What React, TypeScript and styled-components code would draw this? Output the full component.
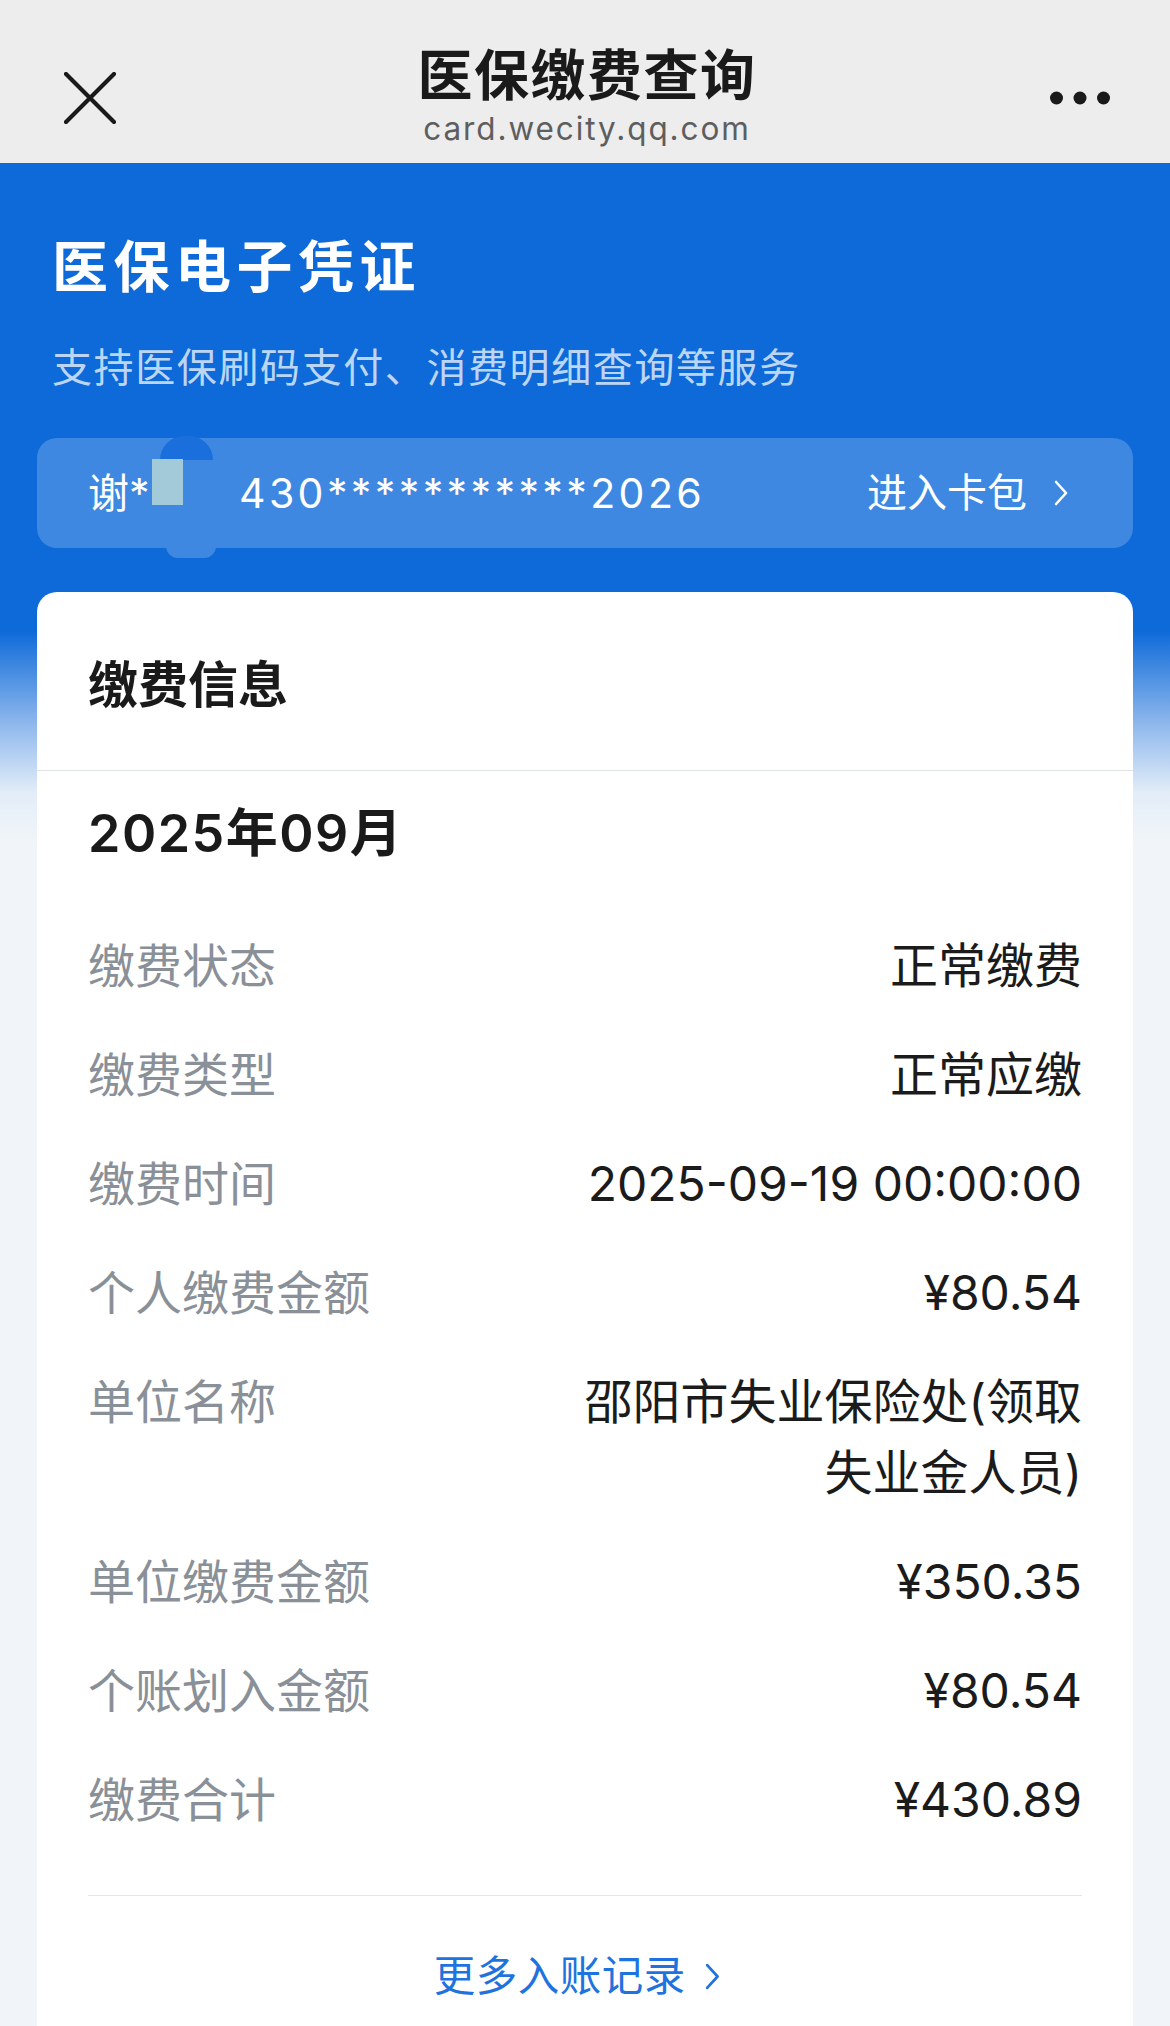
import React from "react";
import styled, { createGlobalStyle } from "styled-components";

const GlobalStyle = createGlobalStyle`
  * {
    box-sizing: border-box;
  }
  body {
    margin: 0;
    background: #f1f5f9;
    font-family: Inter, "Noto Sans CJK SC", sans-serif;
    color: #1a1a1a;
  }
`;

interface RowData {
  label: string;
  value: string;
}

const rows: RowData[] = [
  { label: "缴费状态", value: "正常缴费" },
  { label: "缴费类型", value: "正常应缴" },
  { label: "缴费时间", value: "2025-09-19 00:00:00" },
  { label: "个人缴费金额", value: "¥80.54" },
  { label: "单位名称", value: "邵阳市失业保险处(领取失业金人员)" },
  { label: "单位缴费金额", value: "¥350.35" },
  { label: "个账划入金额", value: "¥80.54" },
  { label: "缴费合计", value: "¥430.89" },
];

function CloseIcon() {
  return (
    <svg width="52" height="52" viewBox="0 0 52 52">
      <path d="M2 2 L50 50 M50 2 L2 50" stroke="#1a1a1a" strokeWidth="4.2" strokeLinecap="round" />
    </svg>
  );
}

function MoreIcon() {
  return (
    <svg width="60" height="14" viewBox="0 0 60 14">
      <circle cx="6.5" cy="7" r="6.5" fill="#1a1a1a" />
      <circle cx="30" cy="7" r="6.5" fill="#1a1a1a" />
      <circle cx="53.5" cy="7" r="6.5" fill="#1a1a1a" />
    </svg>
  );
}

function Chevron({ color, h }: { color: string; h: number }) {
  return (
    <svg width={h * 0.62} height={h} viewBox="0 0 16 26">
      <path d="M3 2 L13 13 L3 24" fill="none" stroke={color} strokeWidth="2.6" strokeLinecap="round" strokeLinejoin="round" />
    </svg>
  );
}

export default function App() {
  return (
    <>
      <GlobalStyle />
      <Page>
        <NavBar>
          <NavSide>
            <CloseIcon />
          </NavSide>
          <NavTitle>
            <h1>医保缴费查询</h1>
            <span>card.wecity.qq.com</span>
          </NavTitle>
          <NavSide $right>
            <MoreIcon />
          </NavSide>
        </NavBar>

        <Main>
          <Hero>
            <h2>医保电子凭证</h2>
            <p>支持医保刷码支付、消费明细查询等服务</p>
          </Hero>

          <CardBar>
            <Smudge>
              <span className="dome" />
              <span className="patch" />
              <span className="tail" />
            </Smudge>
            <Holder>谢*</Holder>
            <CardNo>430***********2026</CardNo>
            <Wallet>
              进入卡包
              <Chevron color="#ffffff" h={26} />
            </Wallet>
          </CardBar>

          <InfoCard>
            <InfoHead>缴费信息</InfoHead>
            <InfoBody>
              <Month>2025年09月</Month>
              <RowList>
                {rows.map((r) => (
                  <Row key={r.label}>
                    <Label>{r.label}</Label>
                    <Value>{r.value}</Value>
                  </Row>
                ))}
              </RowList>
              <MoreLink>
                更多入账记录
                <Chevron color="#1f73de" h={27} />
              </MoreLink>
            </InfoBody>
          </InfoCard>
        </Main>
      </Page>
    </>
  );
}

const Page = styled.div`
  width: 1170px;
  min-height: 2026px;
  overflow: hidden;
`;

const NavBar = styled.header`
  height: 163px;
  background: #ededed;
  display: grid;
  grid-template-columns: 1fr auto 1fr;
  padding: 0 60px 0 64px;
`;

const NavSide = styled.div<{ $right?: boolean }>`
  display: flex;
  align-items: center;
  justify-content: ${(p) => (p.$right ? "flex-end" : "flex-start")};
  padding-top: 32px;
`;

const NavTitle = styled.div`
  display: flex;
  flex-direction: column;
  align-items: center;
  padding-top: 44px;

  & h1 {
    margin: 0;
    font-size: 55px;
    line-height: 62px;
    font-weight: 700;
    color: #1a1a1a;
    letter-spacing: 1.5px;
  }

  & span {
    margin-top: 4px;
    font-size: 31.5px;
    line-height: 38px;
    color: #5e5e5e;
    letter-spacing: 1.9px;
  }
`;

const Main = styled.main`
  padding: 0 37px;
  background: linear-gradient(180deg, #0e6ad9 0px, #0e6ad9 468px, #8db7ec 560px, #e3edf8 630px, #f1f5f9 680px);
`;

const Hero = styled.section`
  padding: 72px 0 0 15px;
  color: #ffffff;

  & h2 {
    margin: 0;
    font-size: 56px;
    line-height: 64px;
    font-weight: 700;
    letter-spacing: 5.5px;
  }

  & p {
    margin: 44px 0 0;
    font-size: 40px;
    line-height: 50px;
    letter-spacing: 1.6px;
    color: rgba(255, 255, 255, 0.74);
  }
`;

const CardBar = styled.div`
  position: relative;
  margin-top: 45px;
  height: 110px;
  border-radius: 20px;
  background: #3e88e1;
  display: flex;
  align-items: center;
  padding: 0 64px 0 51px;
  color: #ffffff;
`;

const Smudge = styled.div`
  position: absolute;
  left: 115px;
  top: -2px;
  width: 65px;
  height: 122px;
  pointer-events: none;

  & .dome {
    position: absolute;
    left: 8px;
    top: 0;
    width: 53px;
    height: 24px;
    border-radius: 27px 27px 0 0;
    background: #1a6fdc;
  }

  & .patch {
    position: absolute;
    left: 0;
    top: 23px;
    width: 31px;
    height: 46px;
    background: #a2cad8;
  }

  & .tail {
    position: absolute;
    left: 14px;
    bottom: 0;
    width: 50px;
    height: 12px;
    border-radius: 0 0 20px 20px;
    background: #3e88e1;
  }
`;

const Holder = styled.span`
  width: 151px;
  font-size: 41px;
  line-height: 50px;
`;

const CardNo = styled.span`
  flex: 1;
  font-size: 41px;
  line-height: 50px;
  letter-spacing: 3.4px;
`;

const Wallet = styled.span`
  display: flex;
  align-items: center;
  gap: 26px;
  font-size: 40px;
  line-height: 50px;
`;

const InfoCard = styled.section`
  margin-top: 44px;
  background: #ffffff;
  border-radius: 20px 20px 0 0;
`;

const InfoHead = styled.div`
  height: 179px;
  display: flex;
  align-items: center;
  padding: 0 51px;
  font-size: 50px;
  font-weight: 700;
  border-bottom: 1px solid #dfe2e6;
`;

const InfoBody = styled.div`
  padding: 27px 51px 0;
`;

const Month = styled.div`
  font-size: 52px;
  line-height: 72px;
  font-weight: 600;
  letter-spacing: 1.5px;
`;

const RowList = styled.div`
  margin-top: 41px;
  padding-bottom: 41px;
  border-bottom: 1px solid #e3e5e8;
`;

const Row = styled.div`
  display: flex;
  justify-content: space-between;
  align-items: flex-start;
  padding: 19px 0;
  font-size: 47px;
  line-height: 71px;
`;

const Label = styled.span`
  flex-shrink: 0;
  color: #8a9098;
`;

const Value = styled.span`
  max-width: 500px;
  text-align: right;
  color: #1b1b1b;
  font-size: 48px;
`;

const MoreLink = styled.div`
  display: flex;
  align-items: center;
  justify-content: center;
  gap: 18px;
  padding: 50px 16px 60px 0;
  font-size: 41.5px;
  line-height: 60px;
  letter-spacing: 0.5px;
  color: #1f73de;
`;
